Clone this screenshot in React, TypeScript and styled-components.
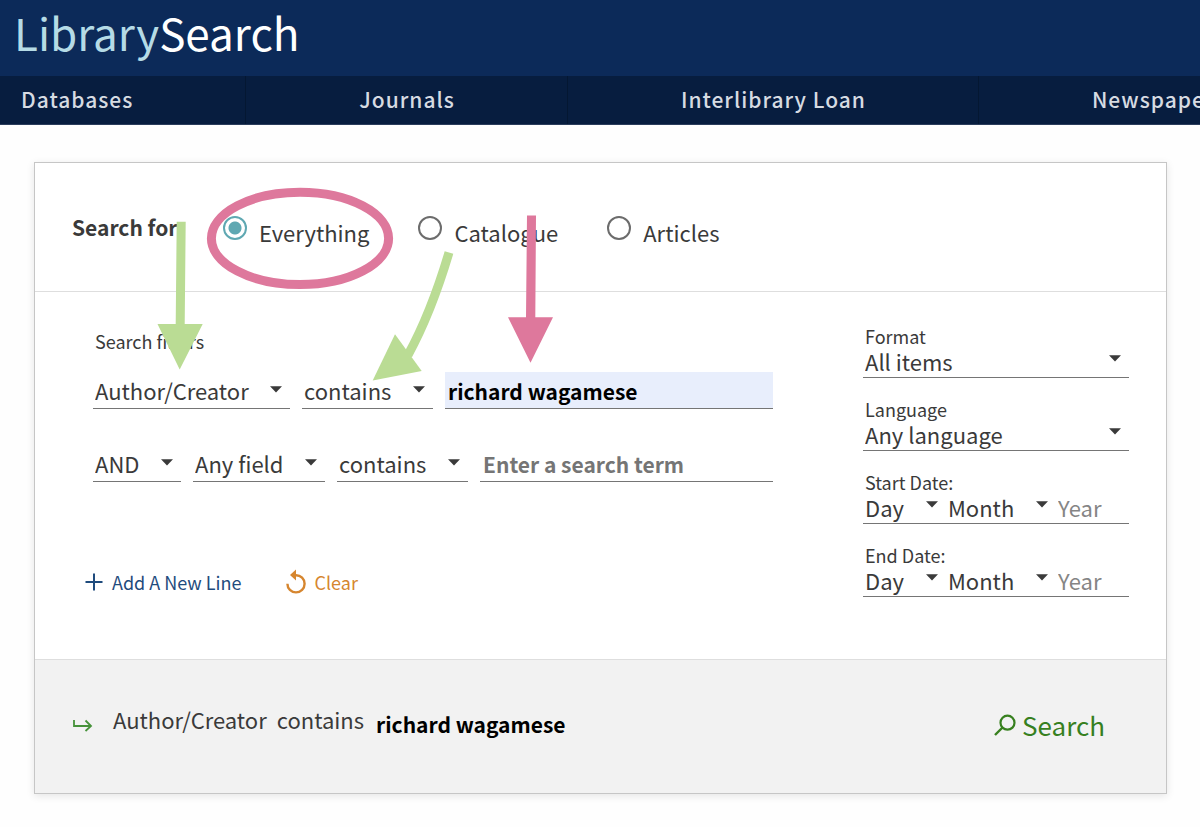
import React, { useState } from "react";
import styled, { createGlobalStyle } from "styled-components";

const GlobalStyle = createGlobalStyle`
  *, *::before, *::after { box-sizing: border-box; }
  body {
    margin: 0;
    background: #fefefe;
    color: #3a3a3a;
    font-family: "Noto Sans CJK SC", "Noto Sans", sans-serif;
    font-size: 22px;
    line-height: 32px;
  }
  input, select, button {
    font: inherit;
    color: inherit;
    margin: 0;
    padding: 0;
    border: 0;
    border-radius: 0;
    background: none;
    appearance: none;
    outline: none;
    min-width: 0;
  }
  button { cursor: pointer; }
  h1, h2 { margin: 0; }
`;

const Page = styled.div`
  overflow-x: hidden;
  padding-bottom: 33px;
`;

const Header = styled.header`
  background: #0c2a59;
  height: 76px;
  padding: 0 14px;
`;

const Logo = styled.h1`
  font-size: 44px;
  line-height: 64px;
  font-weight: 400;
  color: #fff;
`;

const LogoAccent = styled.span`
  color: #b5dbe6;
`;

const Nav = styled.nav`
  display: flex;
  height: 49px;
  background: #071d3f;
  border-bottom: 1px solid #2b3d5c;
  overflow: hidden;
`;

const NavLink = styled.a<{ $first?: boolean }>`
  flex: none;
  padding: 0 112px 0 ${(p) => (p.$first ? 21 : 113)}px;
  border-right: 1px solid #041732;
  color: #d6dbe2;
  font-size: 21px;
  font-weight: 500;
  line-height: 47px;
  letter-spacing: 1px;
  white-space: nowrap;
  text-decoration: none;
`;

const Card = styled.form`
  position: relative;
  margin: 37px 33px 0 34px;
  background: #fff;
  border: 1px solid #c6c6c6;
  box-shadow: 0 2px 8px rgba(0, 0, 0, 0.1);
`;

const ScopeRow = styled.div`
  display: flex;
  align-items: flex-start;
  height: 129px;
  padding: 49px 37px 0;
  border-bottom: 1px solid #dedede;
`;

const ScopeTitle = styled.h2`
  width: 151px;
  font-size: 21px;
  line-height: 30px;
  font-weight: 700;
`;

const RadioLabel = styled.label`
  display: flex;
  gap: 12px;
  margin-right: 49px;
`;

const Radio = styled.input`
  flex: none;
  width: 24px;
  height: 24px;
  margin-top: 4px;
  border: 2px solid #6c6c6c;
  border-radius: 50%;
  &:checked {
    border-color: #5fa8b2;
    background: radial-gradient(circle, #5fa8b2 6px, transparent 7px);
  }
`;

const RadioText = styled.span`
  padding-top: 4px;
`;

const Body = styled.div`
  display: flex;
  gap: 90px;
  height: 368px;
  padding: 35px 37px 0 58px;
  border-bottom: 1px solid #dedede;
`;

const Filters = styled.div`
  flex: 1;
  min-width: 0;
`;

const SmallLabel = styled.div`
  display: block;
  padding-left: 2px;
  font-size: 18px;
  line-height: 18px;
`;

const FiltersHeading = styled(SmallLabel)`
  padding-top: 5px;
  margin-bottom: 22px;
`;

const FilterRow = styled.div`
  display: flex;
  gap: 12px;
  margin-bottom: 36px;
`;

const SelectBox = styled.div<{ $width?: number; $plain?: boolean }>`
  position: relative;
  flex: ${(p) => (p.$width ? `0 0 ${p.$width}px` : "1 1 auto")};
  border-bottom: ${(p) => (p.$plain ? "0" : "1px solid #757575")};
`;

const Select = styled.select<{ $tall?: boolean }>`
  display: block;
  width: 100%;
  height: ${(p) => (p.$tall ? 36 : 32)}px;
  padding: 0 20px 0 2px;
`;

const Caret = styled.svg<{ $top: number }>`
  position: absolute;
  right: 8px;
  top: ${(p) => p.$top}px;
  pointer-events: none;
`;

const TermInput = styled.input`
  flex: 1;
  height: 37px;
  padding: 1px 3px 0;
  border-bottom: 1px solid #757575;
  font-size: 21px;
  font-weight: 700;
  background: ${(p) => (p.value ? "#e8eefc" : "none")};
  color: #000;
  &::placeholder { color: #757575; opacity: 1; }
`;

const Actions = styled.div`
  display: flex;
  gap: 44px;
  margin: 84px 0 0 -8px;
`;

const Action = styled.button<{ $color: string }>`
  display: flex;
  align-items: center;
  color: ${(p) => p.$color};
  font-size: 18px;
  line-height: 32px;
`;

const ActionText = styled.span`
  margin-left: 9px;
`;

const Limits = styled.div`
  flex: 0 0 266px;
  min-width: 0;
  display: flex;
  flex-direction: column;
  gap: 22px;
`;

const LimitControls = styled.div`
  display: flex;
  height: 33px;
  border-bottom: 1px solid #757575;
`;

const YearInput = styled.input`
  flex: 1;
  width: 0;
  padding: 0 2px;
  &::placeholder { color: #858585; opacity: 1; }
`;

const Footer = styled.div`
  display: flex;
  align-items: flex-start;
  height: 133px;
  padding: 43px 61px 0 38px;
  background: #f2f2f2;
`;

const Summary = styled.div`
  display: flex;
  flex: 1;
  gap: 10px;
  margin-left: 20px;
`;

const SummaryTerm = styled.strong`
  padding: 5px 0 0 2px;
  color: #000;
  font-size: 21px;
`;

const SubmitButton = styled.button`
  display: flex;
  align-items: center;
  gap: 6px;
  margin-top: 4px;
  color: #37801f;
  font-size: 26px;
  line-height: 36px;
`;

const ArrowIcon = styled.svg`
  margin-top: 15px;
`;

const Annotations = styled.svg`
  position: absolute;
  left: 115px;
  top: 17px;
  pointer-events: none;
`;

const navItems = ["Databases", "Journals", "Interlibrary Loan", "Newspaper Search"];
const scopes = ["Everything", "Catalogue", "Articles"];

type DropdownProps = {
  label?: string;
  id?: string;
  value: string;
  width?: number;
  tall?: boolean;
  plain?: boolean;
};

function Dropdown({ label, id, value, width, tall, plain }: DropdownProps) {
  return (
    <SelectBox $width={width} $plain={plain}>
      <Select id={id} aria-label={label} $tall={tall} defaultValue={value}>
        <option>{value}</option>
      </Select>
      <Caret $top={tall ? 14 : 10} width="12" height="7" viewBox="0 0 12 7" aria-hidden="true">
        <path d="M0 0.3H12L6 6.5Z" fill="#3a3a3a" />
      </Caret>
    </SelectBox>
  );
}

function DateLimit({ title }: { title: string }) {
  return (
    <div role="group" aria-label={title}>
      <SmallLabel>{title}:</SmallLabel>
      <LimitControls>
        <Dropdown label={`${title} day`} value="Day" width={83} plain />
        <Dropdown label={`${title} month`} value="Month" width={110} plain />
        <YearInput aria-label={`${title} year`} placeholder="Year" />
      </LimitControls>
    </div>
  );
}

export default function App() {
  const [scope, setScope] = useState("Everything");
  const [term, setTerm] = useState("richard wagamese");
  const [second, setSecond] = useState("");

  return (
    <Page>
      <GlobalStyle />
      <Header>
        <Logo><LogoAccent>Library</LogoAccent>Search</Logo>
      </Header>
      <Nav>
        {navItems.map((item, i) => (
          <NavLink key={item} href="#" $first={i === 0}>{item}</NavLink>
        ))}
      </Nav>
      <Card onSubmit={(e) => e.preventDefault()}>
        <ScopeRow role="radiogroup" aria-labelledby="scope-title">
          <ScopeTitle id="scope-title">Search for</ScopeTitle>
          {scopes.map((s) => (
            <RadioLabel key={s}>
              <Radio type="radio" name="scope" checked={scope === s} onChange={() => setScope(s)} />
              <RadioText>{s}</RadioText>
            </RadioLabel>
          ))}
        </ScopeRow>
        <Body>
          <Filters>
            <FiltersHeading>Search filters</FiltersHeading>
            <FilterRow>
              <Dropdown label="Field" value="Author/Creator" width={197} tall />
              <Dropdown label="Match" value="contains" width={131} tall />
              <TermInput aria-label="Search term" value={term} onChange={(e) => setTerm(e.target.value)} />
            </FilterRow>
            <FilterRow>
              <Dropdown label="Operator" value="AND" width={88} tall />
              <Dropdown label="Second field" value="Any field" width={132} tall />
              <Dropdown label="Second match" value="contains" width={131} tall />
              <TermInput
                aria-label="Second search term"
                placeholder="Enter a search term"
                value={second}
                onChange={(e) => setSecond(e.target.value)}
              />
            </FilterRow>
            <Actions>
              <Action type="button" $color="#1f4b7d">
                <svg width="18" height="18" viewBox="0 0 18 18" aria-hidden="true">
                  <path d="M9 0.5V17.5M0.5 9H17.5" stroke="currentColor" strokeWidth="2" />
                </svg>
                <ActionText>Add A New Line</ActionText>
              </Action>
              <Action type="button" $color="#d6862f" onClick={() => setTerm("")}>
                <svg width="20" height="26" viewBox="0 0 20 26" aria-hidden="true">
                  <path d="M9 6.2H10A8.6 8.6 0 1 1 1.4 14.8" fill="none" stroke="currentColor" strokeWidth="2.4" />
                  <path d="M10 0.5V11.5L4 6Z" fill="currentColor" />
                </svg>
                <ActionText>Clear</ActionText>
              </Action>
            </Actions>
          </Filters>
          <Limits>
            <div>
              <SmallLabel as="label" htmlFor="format">Format</SmallLabel>
              <LimitControls><Dropdown id="format" value="All items" plain /></LimitControls>
            </div>
            <div>
              <SmallLabel as="label" htmlFor="language">Language</SmallLabel>
              <LimitControls><Dropdown id="language" value="Any language" plain /></LimitControls>
            </div>
            <DateLimit title="Start Date" />
            <DateLimit title="End Date" />
          </Limits>
        </Body>
        <Footer>
          <ArrowIcon width="20" height="14" viewBox="0 0 20 14" aria-hidden="true">
            <path d="M1 2V8H18M12.5 2.5L18 8L12.5 13" fill="none" stroke="#46923a" strokeWidth="1.8" />
          </ArrowIcon>
          <Summary>
            <span>Author/Creator</span>
            <span>contains</span>
            <SummaryTerm>{term}</SummaryTerm>
          </Summary>
          <SubmitButton type="submit">
            <svg width="22" height="23" viewBox="0 0 22 23" aria-hidden="true">
              <circle cx="13.5" cy="8.7" r="7" fill="none" stroke="currentColor" strokeWidth="2.2" />
              <path d="M8.5 13.5L1 21" stroke="currentColor" strokeWidth="2.4" />
            </svg>
            <span>Search</span>
          </SubmitButton>
        </Footer>
        <Annotations width="410" height="210" viewBox="0 0 410 210" aria-hidden="true">
          <ellipse cx="150" cy="58.4" rx="88.6" ry="46.2" fill="none" stroke="#de789c" strokeWidth="9" />
          <path d="M26.7 41.8H35.7L34.7 144H52.7L29.7 189.5L7.5 144H25.7Z" fill="#badc94" />
          <path d="M299 72.5Q281 133 258 175" fill="none" stroke="#badc94" strokeWidth="9" />
          <path d="M245 154.3L271.7 191L222.7 200.5Z" fill="#badc94" />
          <path d="M377 35.5H386L385.3 137.3H403L380.5 182.8L358 137.3H376Z" fill="#de789c" />
        </Annotations>
      </Card>
    </Page>
  );
}
